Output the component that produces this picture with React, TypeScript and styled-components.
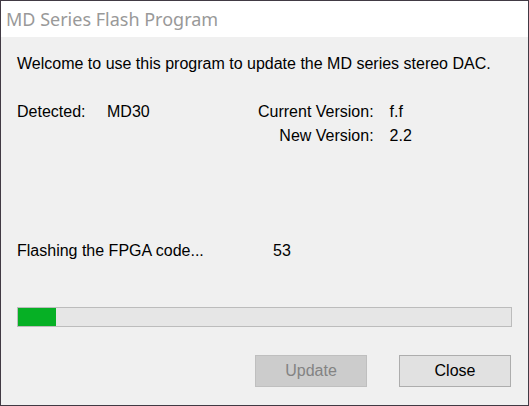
import React from "react";
import styled, { createGlobalStyle } from "styled-components";

const GlobalStyle = createGlobalStyle`
  html, body {
    margin: 0;
    padding: 0;
    background: #ffffff;
  }
  * {
    box-sizing: border-box;
  }
`;

const progress = 53;
const progressFill = 7.7; // percent of the bar shown filled

const App = () => {
  return (
    <>
      <GlobalStyle />
      <Window>
        <TitleBar>MD Series Flash Program</TitleBar>
        <Body>
          <Welcome>Welcome to use this program to update the MD series stereo DAC.</Welcome>
          <Info>
            <Label>Detected:</Label>
            <Value>MD30</Value>
            <RightLabel>Current Version:</RightLabel>
            <Value>f.f</Value>
            <span />
            <span />
            <RightLabel>New Version:</RightLabel>
            <Value>2.2</Value>
          </Info>
          <Status>
            <StatusText>Flashing the FPGA code...</StatusText>
            <Value>{progress}</Value>
          </Status>
          <Bar>
            <BarFill style={{ width: `${progressFill}%` }} />
          </Bar>
          <Buttons>
            <Button disabled>Update</Button>
            <Button>Close</Button>
          </Buttons>
        </Body>
      </Window>
    </>
  );
};

const Window = styled.div`
  width: 529px;
  height: 406px;
  border: 1px solid #413a44;
  display: flex;
  flex-direction: column;
  font-family: "Liberation Sans", Arial, sans-serif;
  font-size: 16px;
  color: #000;
`;

const TitleBar = styled.div`
  height: 36px;
  background: #ffffff;
  display: flex;
  align-items: center;
  padding-left: 5px;
  font-family: "Noto Sans", sans-serif;
  font-size: 18px;
  color: #999999;
`;

const Body = styled.div`
  flex: 1;
  background: #f0f0f0;
  padding: 0 16px;
  display: flex;
  flex-direction: column;
`;

const Welcome = styled.div`
  margin-top: 15px;
  line-height: 24px;
  white-space: nowrap;
`;

const Info = styled.div`
  margin-top: 24px;
  display: grid;
  grid-template-columns: 90px 151px max-content auto;
  line-height: 24px;
`;

const Label = styled.div``;

const Value = styled.div``;

const RightLabel = styled.div`
  text-align: right;
  padding-right: 16px;
  white-space: nowrap;
`;

const Status = styled.div`
  margin-top: 91px;
  display: grid;
  grid-template-columns: 256px auto;
  line-height: 24px;
`;

const StatusText = styled.div``;

const Bar = styled.div`
  margin-top: 44px;
  height: 20px;
  width: 495px;
  border: 1px solid #bcbcbc;
  background: #e6e6e6;
`;

const BarFill = styled.div`
  height: 100%;
  background: #06b025;
`;

const Buttons = styled.div`
  margin-top: 28px;
  display: flex;
  justify-content: flex-end;
  gap: 32px;
  padding-right: 1px;
`;

const Button = styled.button`
  width: 112px;
  height: 32px;
  font-family: inherit;
  font-size: 16px;
  background: #e1e1e1;
  border: 1px solid #adadad;
  color: #000;
  padding: 0;

  &:disabled {
    background: #cccccc;
    border-color: #bfbfbf;
    color: #838383;
  }
`;

export default App;
